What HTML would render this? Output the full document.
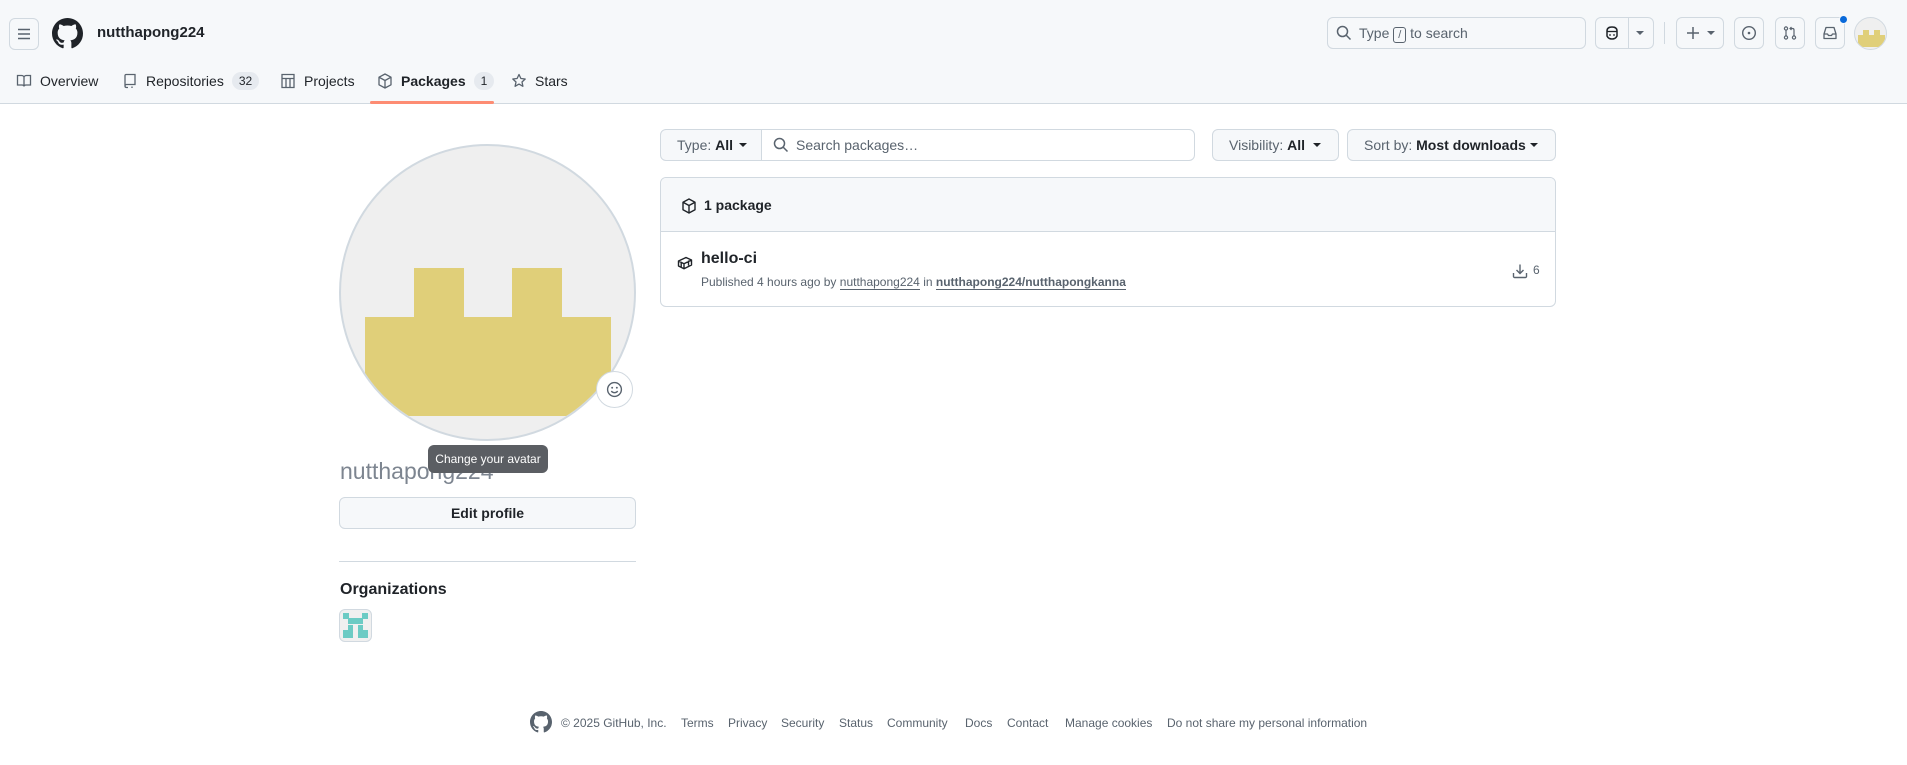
<!DOCTYPE html>
<html><head><meta charset="utf-8"><style>
*{box-sizing:border-box;margin:0;padding:0}
body{width:1907px;height:765px;background:#fff;font-family:"Liberation Sans",sans-serif;color:#1f2328;position:relative;overflow:hidden;font-size:14px}
.a{position:absolute}
.hdr{left:0;top:0;width:1907px;height:104px;background:#f6f8fa;border-bottom:1px solid #d1d9e0}
.btn{position:absolute;border:1px solid #d1d9e0;border-radius:6px;background:#f6f8fa}
svg{display:block}
.tab{position:absolute;top:69px;font-size:14px;color:#1f2328;display:flex;align-items:center;gap:8px;height:24px}
.cnt{background:#e6eaef;border-radius:12px;padding:2px 7px;font-size:12px}
.foot{position:absolute;top:716px;font-size:12px;color:#59636e}
</style></head><body>
<div class="a hdr"></div>
<div class="btn" style="left:9px;top:18px;width:30px;height:32px;background:#f6f8fa"></div>
<svg class="a" style="left:16px;top:26px" width="16" height="16" viewBox="0 0 16 16"><path d="M2 3.5h12M2 8h12M2 12.5h12" stroke="#59636e" stroke-width="1.5"/></svg>
<svg class="a" style="left:52px;top:18px" width="31" height="31" viewBox="0 0 16 16"><path fill="#1f2328" d="M8 0C3.58 0 0 3.58 0 8c0 3.540 2.29 6.53 5.47 7.59.4.07.55-.17.55-.38 0-.19-.01-.82-.01-1.49-2.01.37-2.53-.49-2.69-.94-.09-.23-.48-.94-.82-1.13-.28-.15-.68-.52-.01-.53.63-.01 1.08.58 1.23.82.72 1.21 1.87.87 2.33.66.07-.52.28-.87.51-1.07-1.78-.2-3.64-.89-3.64-3.95 0-.87.31-1.59.82-2.15-.08-.2-.36-1.02.08-2.12 0 0 .67-.21 2.2.82.64-.18 1.32-.27 2-.27.68 0 1.36.09 2 .27 1.53-1.04 2.2-.82 2.2-.82.44 1.1.16 1.92.08 2.12.51.56.82 1.27.82 2.15 0 3.07-1.87 3.75-3.65 3.95.29.25.54.73.54 1.48 0 1.07-.01 1.93-.01 2.2 0 .21.15.46.55.38A8.013 8.013 0 0016 8c0-4.42-3.58-8-8-8z"/></svg>
<div class="a" style="left:97px;top:24px;font-size:15px;font-weight:bold">nutthapong224</div>

<div class="tab" style="left:16px"><svg width="16" height="16" viewBox="0 0 16 16"><path d="M1.5 2.5h4c1.2 0 2.5.8 2.5 2v9c0-1-1-1.5-2-1.5H1.5zM14.5 2.5h-4c-1.2 0-2.5.8-2.5 2v9c0-1 1-1.5 2-1.5h4.5z" fill="none" stroke="#59636e" stroke-width="1.3"/></svg>Overview</div>
<div class="tab" style="left:122px"><svg width="16" height="16" viewBox="0 0 16 16"><path d="M3 13V2.5C3 2 3.5 1.5 4 1.5h9v10H4.5C3.7 11.5 3 12 3 13s.7 1.5 1.5 1.5H6M10 13.5v1.5" fill="none" stroke="#59636e" stroke-width="1.3"/></svg>Repositories <span class="cnt">32</span></div>
<div class="tab" style="left:280px"><svg width="16" height="16" viewBox="0 0 16 16"><path d="M2 1.5h12v13H2zM2 5.5h12M6 5.5v9M10 5.5v9" fill="none" stroke="#59636e" stroke-width="1.3"/></svg>Projects</div>
<div class="tab" style="left:377px;font-weight:bold"><svg width="16" height="16" viewBox="0 0 16 16"><path d="M8 1l6 3.2v7.6L8 15l-6-3.2V4.2zM2 4.2L8 7.5l6-3.3M8 7.5V15" fill="none" stroke="#59636e" stroke-width="1.3" stroke-linejoin="round"/></svg>Packages <span class="cnt" style="font-weight:normal">1</span></div>
<div class="a" style="left:370px;top:101px;width:124px;height:3px;background:#fd8c73;border-radius:2px"></div>
<div class="tab" style="left:511px"><svg width="16" height="16" viewBox="0 0 16 16"><path d="M8 1.5l1.9 4 4.3.5-3.2 3 .9 4.3L8 11.1l-3.9 2.2.9-4.3-3.2-3 4.3-.5z" fill="none" stroke="#59636e" stroke-width="1.3" stroke-linejoin="round"/></svg>Stars</div>

<div class="btn" style="left:1327px;top:17px;width:259px;height:32px;background:#f6f8fa"></div>
<svg class="a" style="left:1336px;top:25px" width="16" height="16" viewBox="0 0 16 16"><circle cx="6.5" cy="6.5" r="5" fill="none" stroke="#59636e" stroke-width="1.5"/><path d="M10 10l4.5 4.5" stroke="#59636e" stroke-width="1.5"/></svg>
<div class="a" style="left:1359px;top:25px;font-size:14px;color:#59636e">Type <span style="display:inline-block;border:1px solid #59636e;border-radius:3px;width:13px;height:16px;font-size:11px;text-align:center;line-height:14px">/</span> to search</div>
<div class="btn" style="left:1595px;top:17px;width:59px;height:32px"></div>
<div class="a" style="left:1628px;top:18px;width:1px;height:30px;background:#d1d9e0"></div>
<svg class="a" style="left:1604px;top:25px" width="16" height="16" viewBox="0 0 16 16"><path d="M3 6c0-3 2-4 5-4s5 1 5 4v5c-1 2-3 3-5 3s-4-1-5-3z" fill="none" stroke="#1f2328" stroke-width="1.5"/><path d="M3 6.5h10" stroke="#1f2328" stroke-width="1.3"/><circle cx="6" cy="10" r=".9" fill="#1f2328"/><circle cx="10" cy="10" r=".9" fill="#1f2328"/></svg>
<div class="a" style="left:1636px;top:31px;border:4px solid transparent;border-top:4px solid #59636e"></div>
<div class="a" style="left:1664px;top:22px;width:1px;height:22px;background:#d1d9e0"></div>
<div class="btn" style="left:1676px;top:17px;width:48px;height:32px"></div>
<svg class="a" style="left:1685px;top:25px" width="16" height="16" viewBox="0 0 16 16"><path d="M8 2v12M2 8h12" stroke="#59636e" stroke-width="1.5"/></svg>
<div class="a" style="left:1707px;top:31px;border:4px solid transparent;border-top:4px solid #59636e"></div>
<div class="btn" style="left:1734px;top:17px;width:30px;height:32px"></div>
<svg class="a" style="left:1741px;top:25px" width="16" height="16" viewBox="0 0 16 16"><circle cx="8" cy="8" r="6.3" fill="none" stroke="#59636e" stroke-width="1.4"/><circle cx="8" cy="8" r="1.3" fill="#59636e"/></svg>
<div class="btn" style="left:1775px;top:17px;width:30px;height:32px"></div>
<svg class="a" style="left:1782px;top:25px" width="16" height="16" viewBox="0 0 16 16"><circle cx="4" cy="3.5" r="1.6" fill="none" stroke="#59636e" stroke-width="1.2"/><circle cx="4" cy="12.5" r="1.6" fill="none" stroke="#59636e" stroke-width="1.2"/><circle cx="12" cy="12.5" r="1.6" fill="none" stroke="#59636e" stroke-width="1.2"/><path d="M4 5v6M12 11V5c0-1-.5-1.5-1.5-1.5H8M9.5 2l-1.5 1.5L9.5 5" fill="none" stroke="#59636e" stroke-width="1.2"/></svg>
<div class="btn" style="left:1815px;top:17px;width:30px;height:32px"></div>
<svg class="a" style="left:1822px;top:25px" width="16" height="16" viewBox="0 0 16 16"><path d="M2 9l2-6.5h8L14 9v4.5H2zM2 9h3.5l1 1.5h3l1-1.5H14" fill="none" stroke="#59636e" stroke-width="1.3" stroke-linejoin="round"/></svg>
<div class="a" style="left:1839px;top:15px;width:9px;height:9px;border-radius:50%;background:#0969da;border:1px solid #f6f8fa"></div>
<div class="a" style="left:1854px;top:17px;width:33px;height:33px;border-radius:50%;background:#efefef;overflow:hidden;border:1px solid #d1d9e0">
<div class="a" style="left:3px;top:17px;width:27px;height:12px;background:#e0cf79"></div>
<div class="a" style="left:8px;top:12px;width:6px;height:6px;background:#e0cf79"></div>
<div class="a" style="left:19px;top:12px;width:6px;height:6px;background:#e0cf79"></div></div>

<!-- left column -->
<div class="a" style="left:339px;top:144px;width:297px;height:297px;border-radius:50%;background:#efefef;border:2px solid #d1d9e0;overflow:hidden">
<div class="a" style="left:24px;top:171px;width:246px;height:99px;background:#e0cf79"></div>
<div class="a" style="left:73px;top:122px;width:50px;height:50px;background:#e0cf79"></div>
<div class="a" style="left:171px;top:122px;width:50px;height:50px;background:#e0cf79"></div>
</div>
<div class="a" style="left:596px;top:371px;width:37px;height:37px;border-radius:50%;background:#fff;border:1px solid #d1d9e0"></div>
<svg class="a" style="left:606px;top:381px" width="17" height="17" viewBox="0 0 16 16"><circle cx="8" cy="8" r="6.5" fill="none" stroke="#59636e" stroke-width="1.3"/><circle cx="5.8" cy="6.3" r=".9" fill="#59636e"/><circle cx="10.2" cy="6.3" r=".9" fill="#59636e"/><path d="M5 9.5c1.5 2 4.5 2 6 0" fill="none" stroke="#59636e" stroke-width="1.3"/></svg>
<div class="a" style="left:340px;top:458px;font-size:23px;color:#7d8590">nutthapong224</div>
<div class="a" style="left:428px;top:445px;width:120px;height:28px;background:#5b5e63;border-radius:6px;color:#fff;font-size:12px;text-align:center;line-height:28px">Change your avatar</div>
<div class="btn" style="left:339px;top:497px;width:297px;height:32px;text-align:center;line-height:30px;font-weight:bold;font-size:14px">Edit profile</div>
<div class="a" style="left:339px;top:561px;width:297px;height:1px;background:#d1d9e0"></div>
<div class="a" style="left:340px;top:581px;font-size:16px;font-weight:bold">Organizations</div>
<div class="a" style="left:339px;top:609px;width:33px;height:33px;border-radius:6px;border:1px solid #d1d9e0;background:#f0f0f0;overflow:hidden">
<div class="a" style="left:3px;top:3px;width:6px;height:6px;background:#6ccbc4"></div>
<div class="a" style="left:22px;top:3px;width:6px;height:6px;background:#6ccbc4"></div>
<div class="a" style="left:8px;top:8px;width:15px;height:6px;background:#6ccbc4"></div>
<div class="a" style="left:3px;top:20px;width:10px;height:8px;background:#6ccbc4"></div>
<div class="a" style="left:18px;top:20px;width:10px;height:8px;background:#6ccbc4"></div>
<div class="a" style="left:8px;top:15px;width:5px;height:5px;background:#6ccbc4"></div>
<div class="a" style="left:18px;top:15px;width:5px;height:5px;background:#6ccbc4"></div></div>

<!-- right column -->
<div class="btn" style="left:660px;top:129px;width:102px;height:32px;border-radius:6px 0 0 6px;font-size:14px;line-height:30px;padding-left:16px;color:#59636e">Type: <b style="color:#1f2328">All</b></div>
<div class="a" style="left:739px;top:143px;border:4px solid transparent;border-top:4px solid #1f2328"></div>
<div class="a" style="left:761px;top:129px;width:434px;height:32px;border:1px solid #d1d9e0;border-radius:0 6px 6px 0;background:#fff"></div>
<svg class="a" style="left:773px;top:137px" width="16" height="16" viewBox="0 0 16 16"><circle cx="6.5" cy="6.5" r="5" fill="none" stroke="#59636e" stroke-width="1.5"/><path d="M10 10l4.5 4.5" stroke="#59636e" stroke-width="1.5"/></svg>
<div class="a" style="left:796px;top:137px;font-size:14px;color:#59636e">Search packages…</div>
<div class="btn" style="left:1212px;top:129px;width:127px;height:32px;font-size:14px;line-height:30px;padding-left:16px;color:#59636e">Visibility: <b style="color:#1f2328">All</b></div>
<div class="a" style="left:1313px;top:143px;border:4px solid transparent;border-top:4px solid #1f2328"></div>
<div class="btn" style="left:1347px;top:129px;width:209px;height:32px;font-size:14px;line-height:30px;padding-left:16px;color:#59636e">Sort by: <b style="color:#1f2328">Most downloads</b></div>
<div class="a" style="left:1530px;top:143px;border:4px solid transparent;border-top:4px solid #1f2328"></div>

<div class="a" style="left:660px;top:177px;width:896px;height:130px;border:1px solid #d1d9e0;border-radius:6px;overflow:hidden">
<div class="a" style="left:0;top:0;width:896px;height:54px;background:#f6f8fa;border-bottom:1px solid #d1d9e0"></div></div>
<svg class="a" style="left:681px;top:198px" width="16" height="16" viewBox="0 0 16 16"><path d="M8 1l6 3.2v7.6L8 15l-6-3.2V4.2zM2 4.2L8 7.5l6-3.3M8 7.5V15" fill="none" stroke="#1f2328" stroke-width="1.4" stroke-linejoin="round"/></svg>
<div class="a" style="left:704px;top:197px;font-size:14px;font-weight:bold">1 package</div>
<svg class="a" style="left:677px;top:255px" width="16" height="16" viewBox="0 0 16 16"><path d="M1.5 6L9 2.5l5.5 2.5v5L7 13.8 1.5 11zM1.5 6L7 8.8l7.5-3.8M7 8.8v5M4.2 7.4v5M11.5 5.5v5" fill="none" stroke="#1f2328" stroke-width="1.4" stroke-linejoin="round"/></svg>
<div class="a" style="left:701px;top:250px;font-size:16px;font-weight:bold">hello-ci</div>
<div class="a" style="left:701px;top:275px;font-size:12px;color:#59636e">Published 4 hours ago by <span style="border-bottom:1px solid #59636e">nutthapong224</span> in <b style="color:#59636e;border-bottom:1px solid #59636e">nutthapong224/nutthapongkanna</b></div>
<svg class="a" style="left:1512px;top:263px" width="16" height="16" viewBox="0 0 16 16"><path d="M8 1.5v8.5M4.5 7L8 10.5 11.5 7M1.5 10v3.5c0 .5.5 1 1 1h11c.5 0 1-.5 1-1V10" fill="none" stroke="#59636e" stroke-width="1.4"/></svg>
<div class="a" style="left:1533px;top:263px;font-size:12px;color:#59636e">6</div>

<!-- footer -->
<svg class="a" style="left:530px;top:711px" width="22" height="22" viewBox="0 0 16 16"><path fill="#59636e" d="M8 0C3.58 0 0 3.58 0 8c0 3.54 2.29 6.53 5.47 7.59.4.07.55-.17.55-.38 0-.19-.01-.82-.01-1.49-2.01.37-2.53-.49-2.69-.94-.09-.23-.48-.94-.82-1.13-.28-.15-.68-.52-.01-.53.63-.01 1.08.58 1.23.82.72 1.21 1.87.87 2.33.66.07-.52.28-.87.51-1.07-1.78-.2-3.64-.89-3.64-3.95 0-.87.31-1.59.82-2.15-.08-.2-.36-1.02.08-2.12 0 0 .67-.21 2.2.82.64-.18 1.32-.27 2-.27.68 0 1.36.09 2 .27 1.53-1.04 2.2-.82 2.2-.82.44 1.1.16 1.92.08 2.12.51.56.82 1.27.82 2.15 0 3.07-1.87 3.75-3.65 3.95.29.25.54.73.54 1.48 0 1.07-.01 1.93-.01 2.2 0 .21.15.46.55.38A8.013 8.013 0 0016 8c0-4.42-3.58-8-8-8z"/></svg>
<div class="foot" style="left:561px">© 2025 GitHub, Inc.</div>
<div class="foot" style="left:681px">Terms</div>
<div class="foot" style="left:728px">Privacy</div>
<div class="foot" style="left:781px">Security</div>
<div class="foot" style="left:839px">Status</div>
<div class="foot" style="left:887px">Community</div>
<div class="foot" style="left:965px">Docs</div>
<div class="foot" style="left:1007px">Contact</div>
<div class="foot" style="left:1065px">Manage cookies</div>
<div class="foot" style="left:1167px">Do not share my personal information</div>
</body></html>
